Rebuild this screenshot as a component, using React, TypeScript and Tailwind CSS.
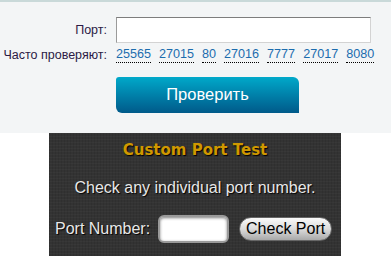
import React from 'react'

const ports = ['25565', '27015', '80', '27016', '7777', '27017', '8080']

export default function App() {
  return (
    <div className="h-[256px] w-[391px] overflow-hidden bg-white font-['Liberation_Sans',Arial,sans-serif]">
      {/* Russian port checker */}
      <div className="h-[133px] border-t-2 border-[#c9d9d9] bg-[#f3f5f6] pt-[15px]">
        <div className="flex items-center">
          <label className="w-[107px] text-right text-[12.5px] text-[#2b1a45]">Порт:</label>
          <input className="ml-[9px] h-[26px] w-[255px] border border-[#d3d3d3] border-t-[#7d7d7d] border-l-[#9a9a9a] bg-white outline-none" />
        </div>
        <div className="mt-[3px] flex items-center">
          <span className="w-[107px] text-right text-[12.5px] text-[#2b1a45]">Часто проверяют:</span>
          <div className="ml-[9px] flex gap-[8px] text-[12.6px] text-[#1b6cae]">
            {ports.map((p) => (
              <a key={p} className="border-b border-dotted border-black leading-[15px]">
                {p}
              </a>
            ))}
          </div>
        </div>
        <button className="ml-[116px] mt-[12px] h-[36px] w-[183px] rounded-tl-[3px] rounded-tr-[6px] rounded-bl-[6px] bg-gradient-to-b from-[#00a9ca] to-[#005a8a] text-[16.5px] text-white">
          Проверить
        </button>
      </div>

      {/* Custom port test widget */}
      <div className="ml-[49px] h-[130px] w-[292px] bg-[#333333] bg-[repeating-linear-gradient(0deg,rgba(255,255,255,0.025)_0px,rgba(255,255,255,0.025)_1px,transparent_1px,transparent_3px),repeating-linear-gradient(90deg,rgba(0,0,0,0.08)_0px,rgba(0,0,0,0.08)_1px,transparent_1px,transparent_3px)] pt-[6px] text-center">
        <h2 className="font-['DejaVu_Sans',Verdana,sans-serif] text-[15px] font-bold text-[#cf9800] [text-shadow:1px_1px_1px_#000]">
          Custom Port Test
        </h2>
        <p className="mt-[14px] text-[16px] text-[#e8e8e8] [text-shadow:1px_1px_1px_#000]">
          Check any individual port number.
        </p>
        <div className="mt-[15px] flex items-center pl-[6px]">
          <span className="text-[16px] text-[#e8e8e8] [text-shadow:1px_1px_1px_#000]">Port Number:</span>
          <input className="ml-[8px] h-[28px] w-[71px] rounded-[6px] border-2 border-[#9a9a9a] bg-white shadow-[inset_0_1px_3px_rgba(0,0,0,0.5)] outline-none" />
          <button className="ml-[10px] h-[24px] w-[93px] rounded-full border border-[#666] bg-gradient-to-b from-[#fafafa] via-[#dcdcdc] to-[#a9a9a9] text-[16px] leading-none text-black">
            Check Port
          </button>
        </div>
      </div>
    </div>
  )
}
